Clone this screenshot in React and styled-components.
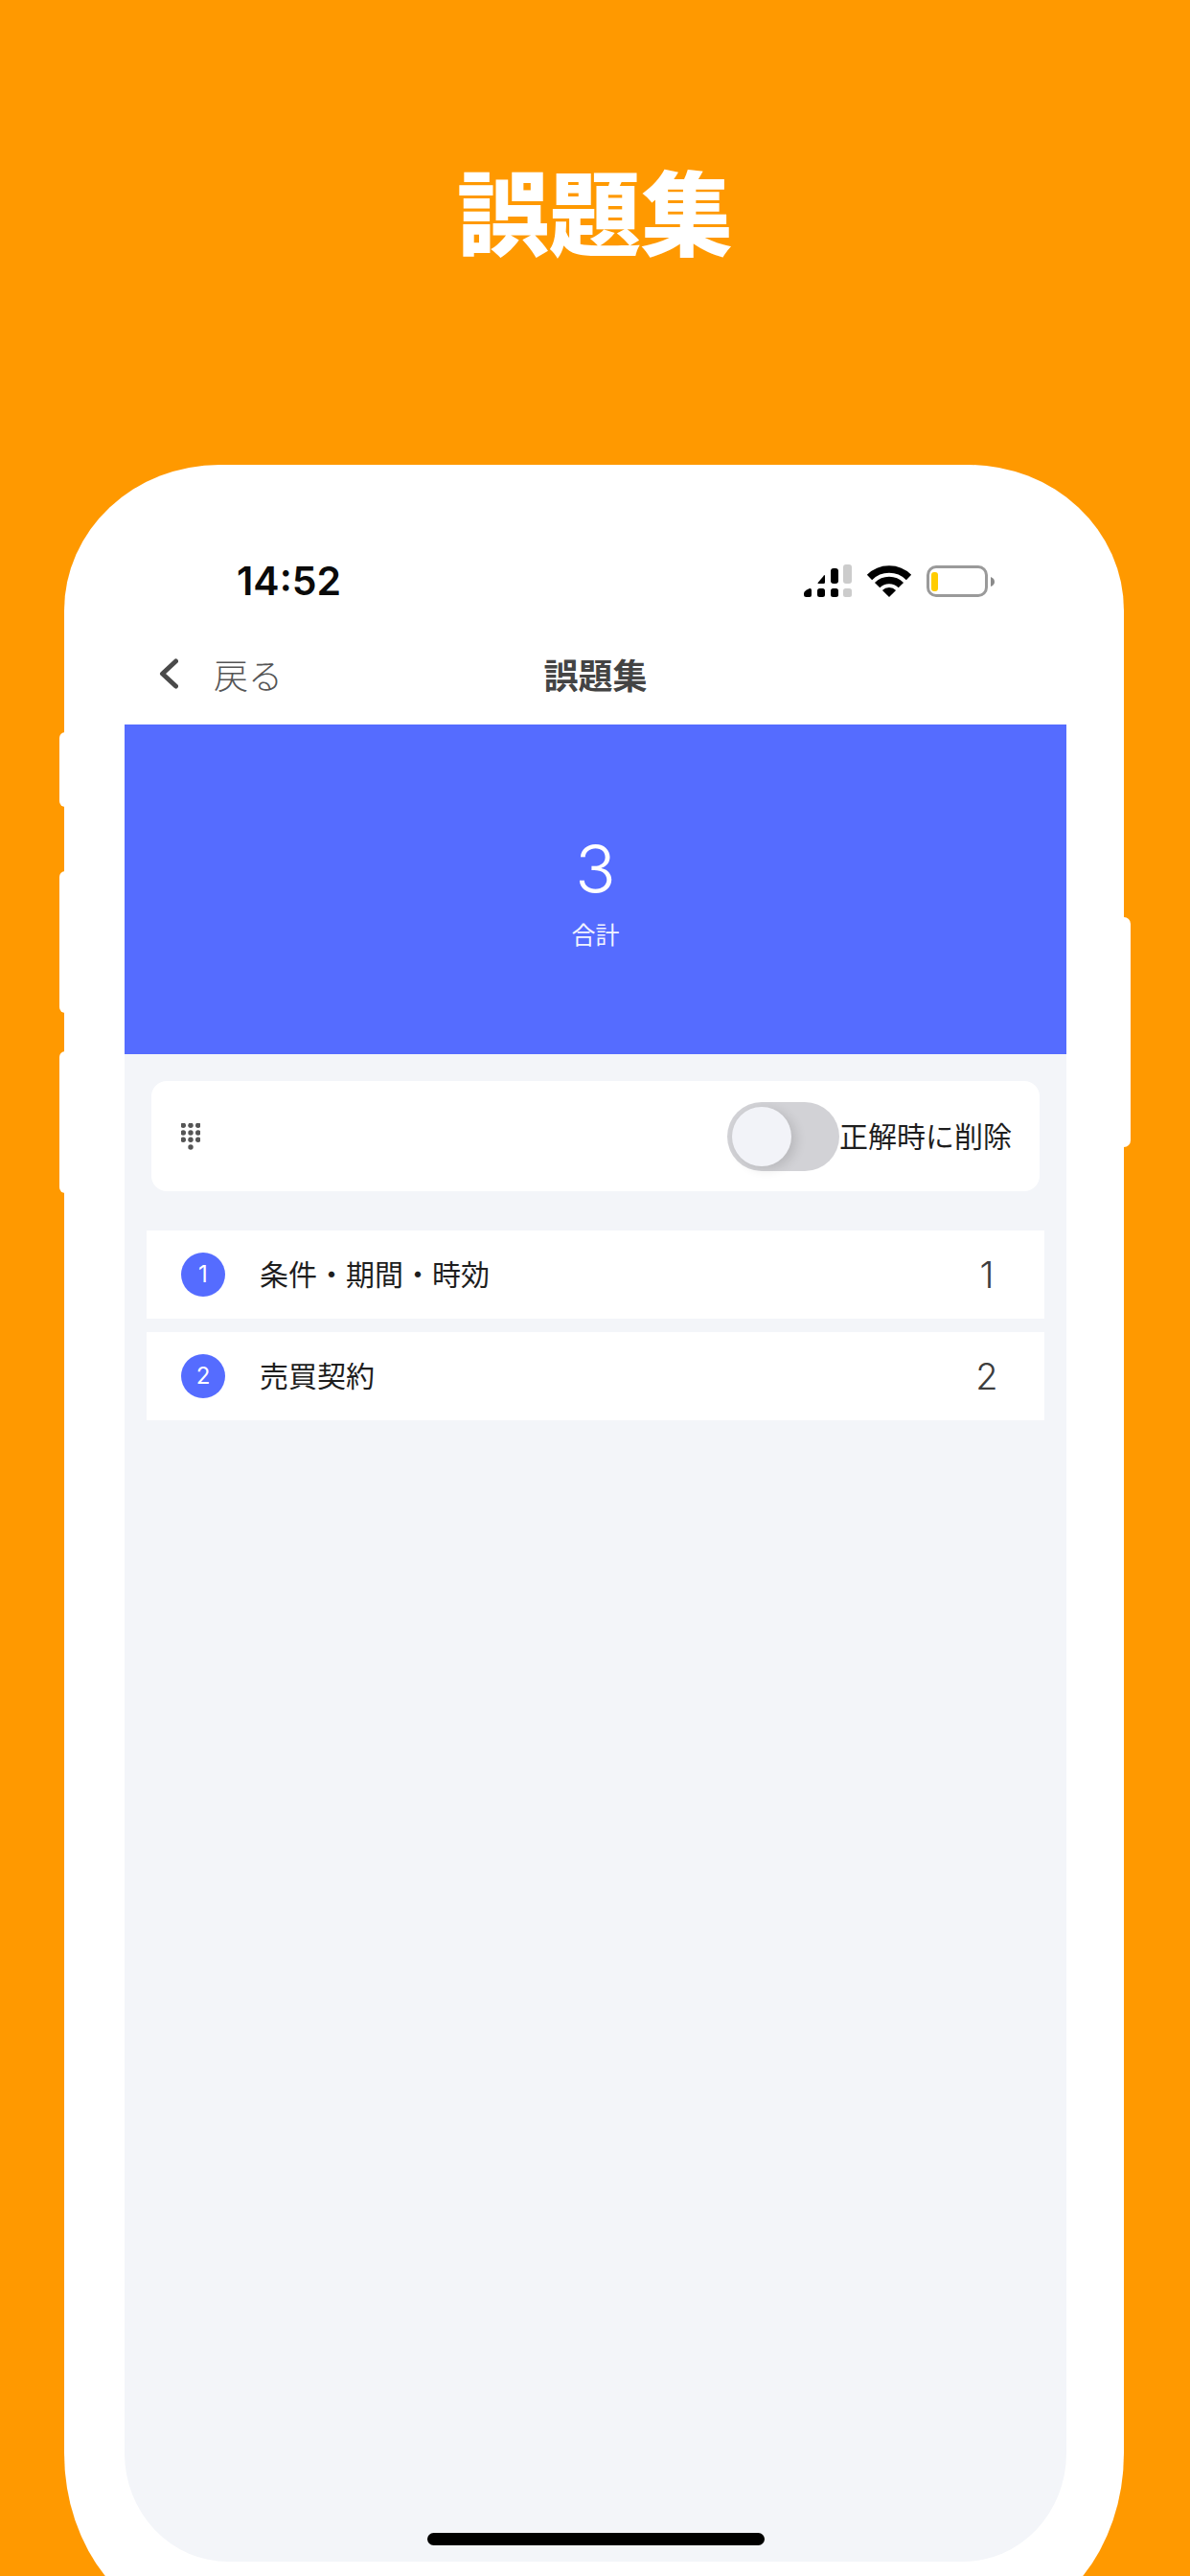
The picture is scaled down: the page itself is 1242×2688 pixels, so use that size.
import React from "react";
import styled, { createGlobalStyle } from "styled-components";

const Global = createGlobalStyle`
  html, body { margin: 0; padding: 0; background: #ff9900; }
  * { box-sizing: border-box; }
  body { font-family: Inter, "Noto Sans CJK JP", sans-serif; }
`;

const Page = styled.div`
  width: 1242px;
  height: 2688px;
  overflow: hidden;
  background: #ff9900;
  display: flex;
  flex-direction: column;
  align-items: center;
`;

const Headline = styled.h1`
  margin: 0;
  height: 485px;
  padding-top: 149px;
  font: 900 96px/138px "Noto Sans CJK JP", sans-serif;
  color: #fff;
  flex: none;
`;

const Phone = styled.div`
  position: relative;
  flex: none;
  align-self: flex-start;
  margin-left: 67px;
  width: 1106px;
  height: 2258px;
  padding: 0 60px 70px 63px;
  background: #fff;
  border-radius: 162px 162px 150px 150px / 152px 152px 183px 183px;
  display: flex;
  flex-direction: column;
`;

const SideButton = styled.div`
  position: absolute;
  top: ${(p) => p.$top}px;
  height: ${(p) => p.$height}px;
  ${(p) => (p.$right ? "right: -7px; border-radius: 0 7px 7px 0;" : "left: -5px; border-radius: 6px 0 0 6px;")}
  width: 8px;
  background: #fff;
`;

const StatusBar = styled.div`
  flex: none;
  height: 160px;
  padding: 82px 74px 0 117px;
  display: flex;
  align-items: center;
`;

const Time = styled.div`
  font: 600 41px/78px Inter, sans-serif;
  color: #0a0a0a;
  margin-right: auto;
`;

const StatusIcons = styled.div`
  display: flex;
  align-items: center;
  gap: 17px;
`;

const Nav = styled.div`
  flex: none;
  height: 111px;
  padding: 5px 36px 0;
  display: grid;
  grid-template-columns: 1fr auto 1fr;
  align-items: center;
`;

const Back = styled.div`
  display: flex;
  align-items: center;
  gap: 37px;
  font: 300 36px/50px "Noto Sans CJK JP", sans-serif;
  color: #555;
`;

const NavTitle = styled.div`
  font: 700 36px/50px "Noto Sans CJK JP", sans-serif;
  color: #444;
`;

const Screen = styled.div`
  flex: 1;
  display: flex;
  flex-direction: column;
  background: #f3f5f9;
  border-radius: 0 0 108px 108px / 0 0 113px 113px;
  position: relative;
`;

const Hero = styled.div`
  flex: none;
  height: 344px;
  padding-top: 117px;
  background: #556cff;
  color: #fff;
  display: flex;
  flex-direction: column;
  align-items: center;
`;

const HeroValue = styled.div`
  font: 300 70px/68px Inter, sans-serif;
`;

const HeroLabel = styled.div`
  margin-top: 15px;
  font: 400 25px/36px "Noto Sans CJK JP", sans-serif;
  opacity: 0.92;
`;

const Body = styled.div`
  flex: 1;
  padding: 28px 23px;
`;

const OptionCard = styled.div`
  height: 115px;
  margin: 0 5px 41px;
  padding: 0 29px 0 31px;
  background: #fff;
  border-radius: 16px;
  display: flex;
  align-items: center;
`;

const Toggle = styled.div`
  position: relative;
  margin-left: auto;
  width: 117px;
  height: 72px;
  border-radius: 36px;
  background: #d2d2d6;
`;

const Knob = styled.div`
  position: absolute;
  top: 5px;
  left: 5px;
  width: 62px;
  height: 62px;
  border-radius: 50%;
  background: #f2f3f8;
  box-shadow: 5px 3px 12px rgba(0, 0, 0, 0.12);
`;

const OptionLabel = styled.div`
  padding-bottom: 4px;
  font: 400 30px/44px "Noto Sans CJK JP", sans-serif;
  color: #1e1e1e;
`;

const List = styled.div`
  display: flex;
  flex-direction: column;
  gap: 14px;
`;

const Row = styled.div`
  height: 92px;
  padding: 0 40px 0 36px;
  background: #fff;
  display: flex;
  align-items: center;
`;

const Badge = styled.div`
  flex: none;
  width: 46px;
  height: 46px;
  margin-right: 36px;
  border-radius: 50%;
  background: #556cff;
  color: #fff;
  font: 400 24px/46px Inter, sans-serif;
  text-align: center;
`;

const RowLabel = styled.div`
  flex: 1;
  padding-bottom: 4px;
  font: 400 30px/44px "Noto Sans CJK JP", sans-serif;
  color: #1e1e1e;
`;

const RowValue = styled.div`
  width: 40px;
  text-align: center;
  font: 300 38px/44px Inter, sans-serif;
  color: #3d3d3d;
`;

const HomeIndicator = styled.div`
  position: absolute;
  left: 316px;
  bottom: 17px;
  width: 352px;
  height: 13px;
  border-radius: 7px;
  background: #000;
`;

const Signal = () => (
  <svg width="50" height="34" viewBox="0 0 50 34">
    <path d="M3 26.5 6 25h0.5Q8 25 8 27v5q0 2-2 2H2.500Q0 34 0 31.500V30Q0 28 3 26.500Z" fill="#000" />
    <rect x="14" y="25" width="8" height="9" rx="2.500" fill="#000" />
    <path d="M22 11.500V18.500Q22 20 20.500 20H15Q14 20 14.700 19L21 11.500Q22 10.500 22 11.500Z" fill="#000" />
    <rect x="28" y="25" width="8" height="9" rx="2.500" fill="#000" />
    <rect x="28" y="4" width="8" height="16" rx="3" fill="#000" />
    <rect x="41" y="0" width="9" height="20" rx="3" fill="#ccc" />
    <rect x="41" y="25" width="9" height="9" rx="2.500" fill="#ccc" />
  </svg>
);

const Wifi = () => (
  <svg width="44" height="33" viewBox="0 0 44 33" style={{ overflow: "visible" }}>
    <path d="M1.500 12.500A29 29 0 0 1 42.500 12.500" fill="none" stroke="#000" strokeWidth="7.500" />
    <path d="M9.630 20.630A17.500 17.500 0 0 1 34.370 20.630" fill="none" stroke="#000" strokeWidth="7.500" />
    <path d="M22 33L14.900 25.900A10 10 0 0 1 29.100 25.900Z" fill="#000" />
  </svg>
);

const Battery = () => (
  <svg width="72" height="33" viewBox="0 0 72 33">
    <rect x="1.500" y="1.500" width="61" height="30" rx="8.500" fill="#fff" stroke="#9a9a9a" strokeWidth="3" />
    <rect x="5" y="7" width="7" height="20" rx="3" fill="#ffcc00" />
    <path d="M67 12Q71 13.500 71 17Q71 20.500 67 22Z" fill="#8a8a8a" />
  </svg>
);

const Chevron = () => (
  <svg width="20" height="32" viewBox="0 0 20 32">
    <path d="M17.500 3L3.500 16L17.500 29" fill="none" stroke="#4a4a4a" strokeWidth="5" strokeLinecap="round" strokeLinejoin="round" />
  </svg>
);

const Dialpad = () => {
  const xs = [2.3, 10, 17.7];
  const ys = [2.3, 10, 17.3];
  return (
    <svg width="20" height="28" viewBox="0 0 20 28">
      {ys.map((y) => xs.map((x) => <circle key={`${x}-${y}`} cx={x} cy={y} r="2.7" fill="#555" />))}
      <circle cx="10" cy="25" r="2.7" fill="#555" />
    </svg>
  );
};

const rows = [
  { n: 1, label: "条件・期間・時効", value: 1 },
  { n: 2, label: "売買契約", value: 2 },
];

export default function App() {
  return (
    <Page>
      <Global />
      <Headline>誤題集</Headline>
      <Phone>
        <SideButton $top={279} $height={78} />
        <SideButton $top={424} $height={148} />
        <SideButton $top={612} $height={148} />
        <SideButton $right $top={472} $height={240} />
        <StatusBar>
          <Time>14:52</Time>
          <StatusIcons>
            <Signal />
            <Wifi />
            <Battery />
          </StatusIcons>
        </StatusBar>
        <Nav>
          <Back>
            <Chevron />
            戻る
          </Back>
          <NavTitle>誤題集</NavTitle>
        </Nav>
        <Screen>
          <Hero>
            <HeroValue>3</HeroValue>
            <HeroLabel>合計</HeroLabel>
          </Hero>
          <Body>
            <OptionCard>
              <Dialpad />
              <Toggle>
                <Knob />
              </Toggle>
              <OptionLabel>正解時に削除</OptionLabel>
            </OptionCard>
            <List>
              {rows.map((r) => (
                <Row key={r.n}>
                  <Badge>{r.n}</Badge>
                  <RowLabel>{r.label}</RowLabel>
                  <RowValue>{r.value}</RowValue>
                </Row>
              ))}
            </List>
          </Body>
          <HomeIndicator />
        </Screen>
      </Phone>
    </Page>
  );
}
